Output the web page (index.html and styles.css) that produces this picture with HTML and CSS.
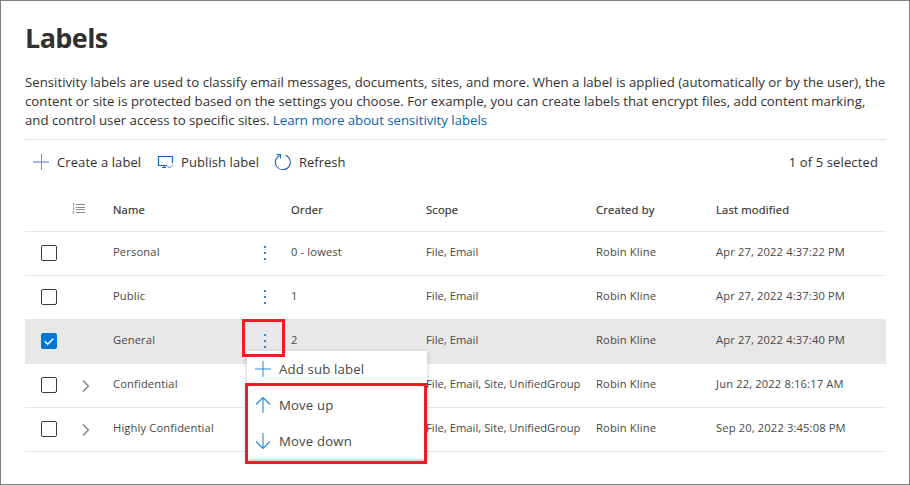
FILE: index.html
```html
<!DOCTYPE html>
<html lang="en">
<head>
<meta charset="utf-8">
<title>Labels</title>
<link rel="stylesheet" href="styles.css">
</head>
<body>
<main class="page">
  <h1 class="title">Labels</h1>
  <p class="intro"><span class="line l1">Sensitivity labels are used to classify email messages, documents, sites, and more. When a label is applied (automatically or by the user), the</span> <span class="line l2">content or site is protected based on the settings you choose. For example, you can create labels that encrypt files, add content marking,</span> <span class="line l3">and control user access to specific sites. <a class="link" href="#">Learn more about sensitivity labels</a></span></p>

  <div class="toolbar">
    <button class="cmd create"><svg class="icon" width="16" height="16" viewBox="0 0 16 16"><path d="M8.500 0v16" stroke="#8a86b8"/><path d="M0 8h16" stroke="#6f93cf" stroke-width="1.300"/></svg><span>Create a label</span></button>
    <button class="cmd publish"><svg class="icon" width="17" height="16" viewBox="0 0 17 16"><path d="M10 11.500H1.500V2.500h14V9M5 13.500h4M7.500 11v2.500" stroke="#1068bd" stroke-width="1.200"/><path d="M10.500 12l2 2 3.500-3.500" stroke="#5a7fbc"/></svg><span>Publish label</span></button>
    <button class="cmd refresh"><svg class="icon" width="18" height="18" viewBox="0 0 18 18"><path d="M11.500 2.200A7.500 7.500 0 1 1 5.700 2.400M2.500 1.500h4v4" stroke="#2468b5" stroke-width="1.100"/></svg><span>Refresh</span></button>
    <span class="count">1 of 5 selected</span>
  </div>

  <div class="table">
    <div class="row head">
      <span></span>
      <span class="list"><svg width="13" height="11" viewBox="0 0 13 11"><path d="M4 1.500h9M4 4.500h9M4 6.500h9M4 9.500h9" stroke="#8a8a8a"/><path d="M1.500 0v3M1.500 4v3M1.500 8v3" stroke="#8195aa"/></svg></span>
      <span>Name</span><span></span><span>Order</span><span>Scope</span><span>Created by</span><span>Last modified</span>
    </div>
    <div class="row">
      <span class="check"></span><span></span><span class="name">Personal</span>
      <span class="more"><i></i><i></i><i></i></span>
      <span class="name">0 - lowest</span><span>File, Email</span><span class="name">Robin Kline</span><span class="date">Apr 27, 2022 4:37:22 PM</span>
    </div>
    <div class="row">
      <span class="check"></span><span></span><span class="name">Public</span>
      <span class="more"><i></i><i></i><i></i></span>
      <span>1</span><span>File, Email</span><span class="name">Robin Kline</span><span class="date">Apr 27, 2022 4:37:30 PM</span>
    </div>
    <div class="row selected">
      <span class="check on"><svg width="16" height="16" viewBox="0 0 16 16"><path d="M3.700 8.300l3 3 5.600-5.600" stroke="#fff" stroke-width="1.500"/></svg></span><span></span><span class="name">General</span>
      <span class="more"><i></i><i></i><i></i></span>
      <span>2</span><span>File, Email</span><span class="name">Robin Kline</span><span class="date">Apr 27, 2022 4:37:40 PM</span>
      <div class="mark mark-more"></div>
      <div class="menu">
        <div class="item"><svg width="16" height="16" viewBox="0 0 16 16"><path d="M8 0v16M0 8h16" stroke="#2588da"/></svg><span>Add sub label</span></div>
        <div class="item"><svg width="16" height="16" viewBox="0 0 16 16"><path d="M8 .7V16M1 7.500l7-7 7 7" stroke="#2588da" stroke-width="1.100"/></svg><span>Move up</span></div>
        <div class="item"><svg width="16" height="16" viewBox="0 0 16 16"><path d="M8 0v15.300M1 8.500l7 7 7-7" stroke="#2588da" stroke-width="1.100"/></svg><span>Move down</span></div>
        <div class="mark mark-move"></div>
      </div>
    </div>
    <div class="row">
      <span class="check"></span>
      <span class="expand"><svg width="8" height="14" viewBox="0 0 8 14"><path d="M1 1.500l5.500 5.500L1 12.500" stroke="#777" stroke-width="1.200"/></svg></span>
      <span class="name">Confidential</span><span></span><span></span><span class="scope">File, Email, Site, UnifiedGroup</span><span class="name">Robin Kline</span><span class="date">Jun 22, 2022 8:16:17 AM</span>
    </div>
    <div class="row">
      <span class="check"></span>
      <span class="expand"><svg width="8" height="14" viewBox="0 0 8 14"><path d="M1 1.500l5.500 5.500L1 12.500" stroke="#777" stroke-width="1.200"/></svg></span>
      <span class="name">Highly Confidential</span><span></span><span></span><span class="scope">File, Email, Site, UnifiedGroup</span><span class="name">Robin Kline</span><span class="date">Sep 20, 2022 3:45:08 PM</span>
    </div>
  </div>
</main>
</body>
</html>
```

FILE: styles.css
```css
* { box-sizing: border-box; }
body { margin: 0; font-family: "Open Sans", "Noto Sans", sans-serif; color: #323130; background: #fff; }
svg { display: block; fill: none; }
.page { width: 910px; height: 485px; border: 1px solid #808080; padding: 16px 23px 0 24px; overflow: hidden; }
.title { margin: 0; height: 42px; line-height: 42px; font-size: 27px; font-weight: 700; letter-spacing: -.6px; }
.intro { margin: 14px 0 0; height: 66px; font-size: 13.2px; line-height: 19px; letter-spacing: .02px; }
.line { display: block; white-space: nowrap; }
.l3 { letter-spacing: 0; }
.link { color: #0563b8; text-decoration: none; }
.toolbar { display: flex; align-items: center; height: 47px; border-top: 1px solid #e3e3e3; padding: 0 8px 2px; font-size: 13px; }
.cmd { display: flex; align-items: center; border: 0; padding: 0; background: none; font: inherit; color: inherit; gap: 8px; white-space: nowrap; }
.create { width: 124px; letter-spacing: .09px; }
.publish { width: 117px; gap: 7px; letter-spacing: .09px; }
.refresh { gap: 7px; }
.count { margin-left: auto; letter-spacing: .13px; white-space: nowrap; }
.table { width: 861px; }
.row { position: relative; display: grid; grid-template-columns: 52px 36px 139px 39px 135px 170px 120px 1fr; align-items: center; height: 44px; padding-bottom: 3px; border-bottom: 1px solid #e8e8e8; font-size: 11.2px; line-height: 16px; letter-spacing: .03px; color: #484746; white-space: nowrap; }
.head { height: 46px; padding: 2px 0 0; font-weight: 500; letter-spacing: .2px; color: #323130; -webkit-text-stroke: .2px #323130; }
.selected { background: #e8e8e8; }
.name, .date { letter-spacing: .13px; }
.check { position: relative; top: 1px; width: 16px; height: 16px; margin-left: 16px; border: 1px solid #3b3a39; border-radius: 2px; }
.check.on { border: 0; background: #0078d4; }
.list { margin: -2px 0 0 -5px; }
.expand { margin-left: 5px; padding-top: 4px; }
.more { display: flex; flex-direction: column; gap: 4px; padding: 1px 0 0 12px; }
.more i { width: 2px; height: 2px; background: #2b88d8; }
.menu { position: absolute; left: 222px; top: 31px; width: 180px; z-index: 2; background: #fff; box-shadow: 0 2px 5px rgba(0, 0, 0, .22); font-size: 13.2px; letter-spacing: .15px; }
.item { display: flex; align-items: center; gap: 8px; height: 36px; padding-left: 8px; }
.mark { position: absolute; border: 3px solid #ed1c24; }
.mark-more { left: 217px; top: -1px; width: 43px; height: 38px; z-index: 3; }
.mark-move { left: -2px; top: 32px; width: 182px; height: 81px; }
```
